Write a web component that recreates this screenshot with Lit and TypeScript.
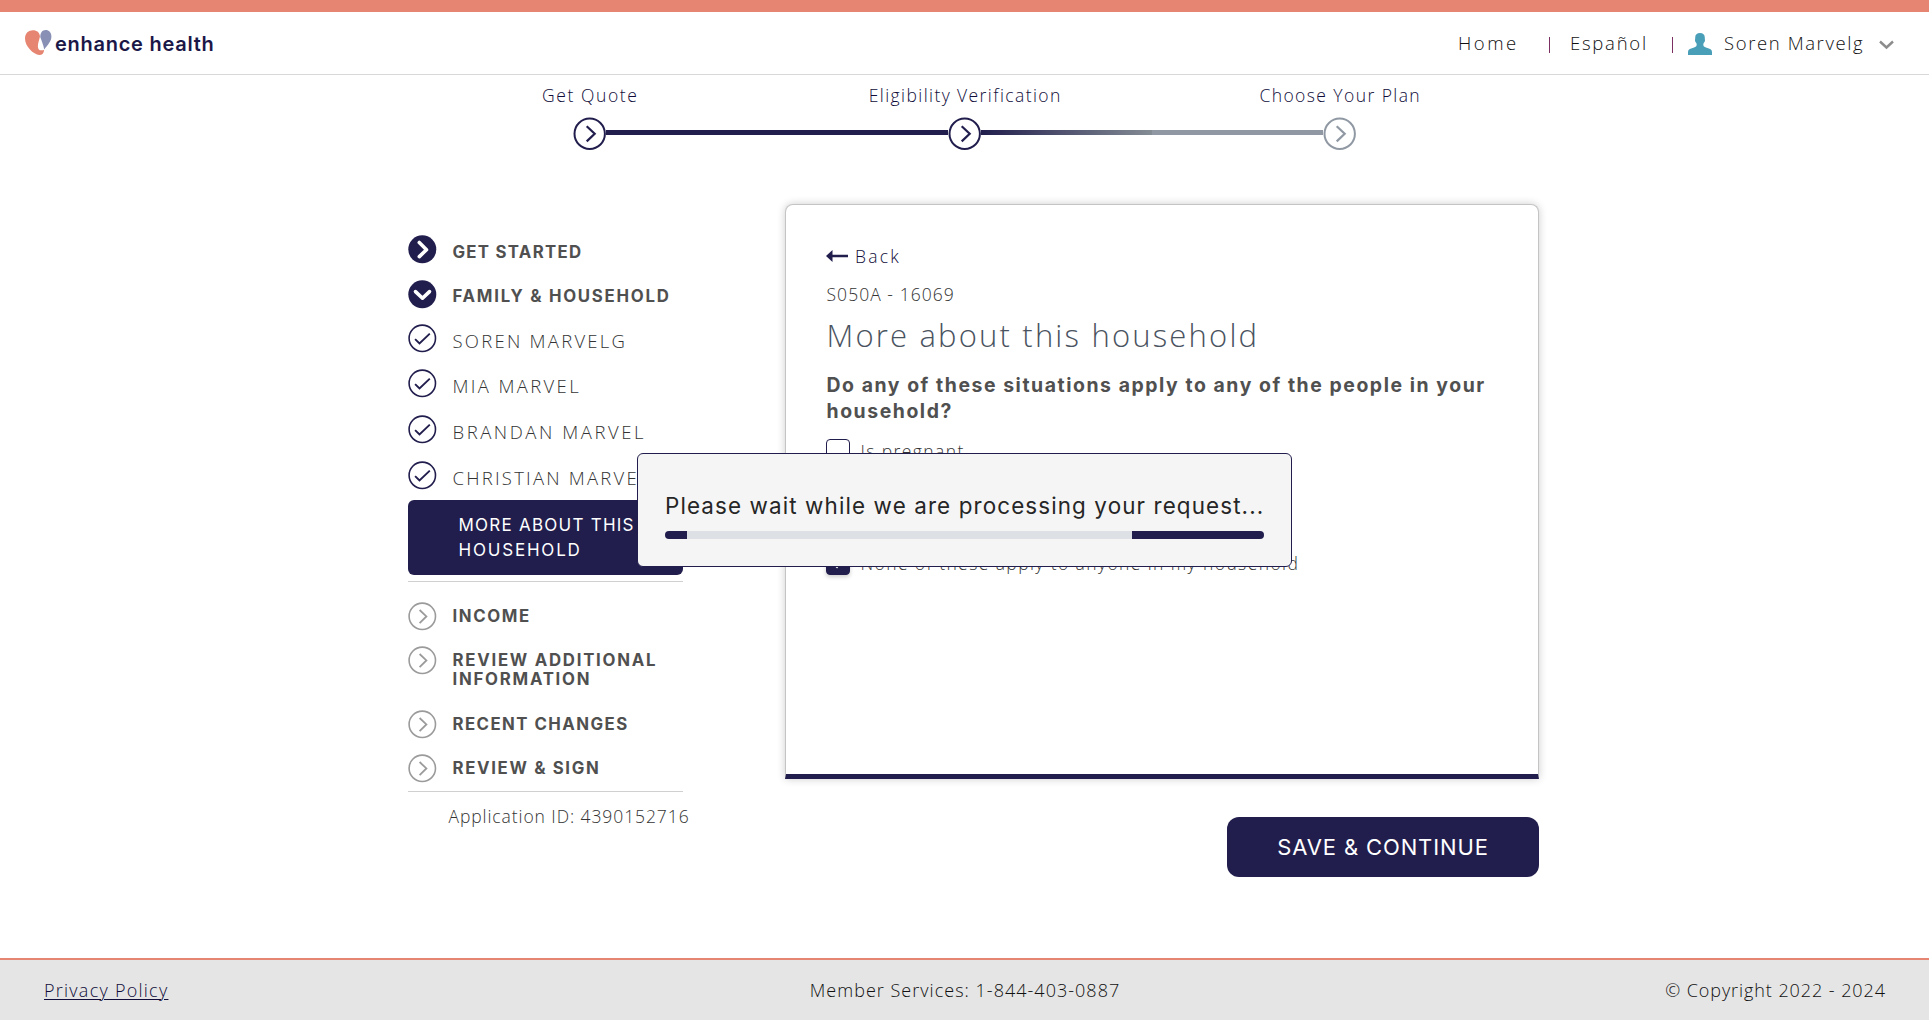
import { LitElement, html, css, svg } from "lit";
import { customElement } from "lit/decorators.js";

type IconKind = "next" | "open" | "check" | "pending";
interface NavRow { label: string; icon: IconKind; kind: string; track: number; }

const TOP_ROWS: NavRow[] = [
  { label: "GET STARTED", icon: "next", kind: "group first", track: 1.28 },
  { label: "FAMILY & HOUSEHOLD", icon: "open", kind: "group second", track: 1.74 },
  { label: "SOREN MARVELG", icon: "check", kind: "member", track: 2.25 },
  { label: "MIA MARVEL", icon: "check", kind: "member mid", track: 2.35 },
  { label: "BRANDAN MARVEL", icon: "check", kind: "member tall", track: 2.55 },
  { label: "CHRISTIAN MARVEL", icon: "check", kind: "member last", track: 2.22 },
];

const BOTTOM_ROWS: NavRow[] = [
  { label: "INCOME", icon: "pending", kind: "group later", track: 1.6 },
  { label: "REVIEW ADDITIONAL INFORMATION", icon: "pending", kind: "group later double", track: 1.74 },
  { label: "RECENT CHANGES", icon: "pending", kind: "group later", track: 1.45 },
  { label: "REVIEW & SIGN", icon: "pending", kind: "group later", track: 1.66 },
];

const STEPS = [
  { label: "Get Quote", state: "done", track: 1.6 },
  { label: "Eligibility Verification", state: "active", track: 1.42 },
  { label: "Choose Your Plan", state: "todo", track: 1.42 },
];

const ICONS = {
  next: svg`<circle cx="14.300" cy="14.300" r="14" fill="#211e4d"/><path d="M11.300 7.500l7.200 7.200-7.200 6.900" fill="none" stroke="#fff" stroke-width="3.600" stroke-linecap="round" stroke-linejoin="round"/>`,
  open: svg`<circle cx="14.300" cy="14.300" r="14" fill="#211e4d"/><path d="M7.500 11.600l7 6.600 7-6.600" fill="none" stroke="#fff" stroke-width="3.600" stroke-linecap="round" stroke-linejoin="round"/>`,
  check: svg`<circle cx="14.300" cy="14.300" r="13.200" fill="#fff" stroke="#211e4d" stroke-width="1.600"/><path d="M7.100 15.100l4.400 4.300L21.800 9.600" fill="none" stroke="#211e4d" stroke-width="1.900"/>`,
  pending: svg`<circle cx="14.300" cy="14.300" r="13.200" fill="#fff" stroke="#9b9b9b" stroke-width="1.600"/><path d="M11.600 8l6.800 6.400-6.800 6.700" fill="none" stroke="#9b9b9b" stroke-width="1.800"/>`,
};

@customElement("app-header")
export class AppHeader extends LitElement {
  static styles = css`
    :host { display: block; }
    .bar {
      box-sizing: border-box; height: 75px; border-top: 12px solid #e68672;
      border-bottom: 1px solid #d8d8d8; display: flex; justify-content: space-between;
      padding: 0 35px 0 25px; background: #fff;
    }
    .brand { display: flex; padding-top: 18px; gap: 3px; }
    .heart { width: 27px; height: 27px; display: block; }
    .name {
      font: 600 20px/28px Inter, sans-serif; letter-spacing: 0.74px; color: #1b1848;
    }
    .links {
      display: flex; align-items: center; height: 63px; padding-bottom: 1px; box-sizing: border-box;
      font: 300 18.5px/28px "Open Sans", sans-serif; color: #111; white-space: nowrap;
    }
    .home { letter-spacing: 2.5px; width: 91px; }
    .lang { letter-spacing: 1.75px; width: 102px; }
    .user { letter-spacing: 1.6px; width: 155px; }
    .sep { width: 1px; height: 16px; background: #7c2f62; margin-top: 4px; }
    .sep.a { margin-right: 20px; }
    .sep.b { margin-right: 15px; }
    .person { width: 24px; height: 22px; margin: 2px 12px 0 0; }
    .caret { width: 15px; height: 10px; margin-top: 4px; }
  `;
  render() {
    return html`<header class="bar">
      <div class="brand">
        <svg class="heart" viewBox="0 0 27 27">
          <path d="M0 8.500C0 3.200 3.600.3 8 .3c4 0 6.500 2.200 7 6-.8 4-2.300 7.400-2.100 10.400.2 3 2 4.400 6.200 3.200-.2 3-1.700 5-4.800 5C8.500 24.600 0 16.500 0 8.500z" fill="#e68672"/>
          <path d="M20.600 0c3.400 0 5.800 2.500 5.800 6.500 0 4.800-3.700 8.500-7.200 13-.6-4.400-2.600-8.600-3.900-12.300C15.200 2.800 17.300 0 20.600 0z" fill="#8890b5"/>
        </svg>
        <span class="name">enhance health</span>
      </div>
      <nav class="links">
        <span class="home">Home</span><i class="sep a"></i>
        <span class="lang">Español</span><i class="sep b"></i>
        <svg class="person" viewBox="0 0 24 22"><path d="M12 0c3 0 4.800 1.600 4.800 4.600 0 1.300.1 1.500.2 2.600.1 1.500-1 2-1.600 3.600-.5 2 .4 3 3.200 4C22 15.700 24 16.500 24 19v3H0v-3c0-2.500 2-3.300 5.400-4.200 2.800-1 3.700-2 3.200-4C8 9.200 6.900 8.700 7 7.200c.1-1.100.2-1.300.2-2.600C7.200 1.600 9 0 12 0z" fill="#4a9fb8"/></svg>
        <span class="user">Soren Marvelg</span>
        <svg class="caret" viewBox="0 0 15 10"><path d="M1 1.500l6.500 6 6.500-6" fill="none" stroke="#8c8c8c" stroke-width="2.400"/></svg>
      </nav>
    </header>`;
  }
}

@customElement("app-steps")
export class AppSteps extends LitElement {
  static styles = css`
    :host { display: block; }
    .steps { display: grid; grid-template-columns: repeat(3, 375px); justify-content: center; padding-top: 7px; }
    .step { display: flex; flex-direction: column; align-items: center; }
    .label { font: 300 17.5px/27px "Open Sans", sans-serif; color: #100d3a; white-space: nowrap; padding-left: 1.5px; }
    .track { display: grid; grid-template-columns: 1fr 33px 1fr; width: 375px; margin-top: 8px; }
    .line { height: 5px; margin-top: 13px; }
    .dot { width: 33px; height: 33px; display: block; overflow: visible; }
    .navy { background: #211e4d; }
    .fade { background: linear-gradient(90deg, #211e4d, #848c94); }
    .grey { background: #8f98a3; }
  `;
  render() {
    const lines: Record<string, [string, string]> = {
      done: ["", "navy"], active: ["navy", "fade"], todo: ["grey", ""],
    };
    return html`<div class="steps">${STEPS.map(s => {
      const ink = s.state === "todo" ? "#8f98a3" : "#211e4d";
      return html`<div class="step">
        <span class="label" style="letter-spacing:${s.track}px">${s.label}</span>
        <div class="track">
          <i class="line ${lines[s.state][0]}"></i>
          <svg class="dot" viewBox="0 0 33 33"><circle cx="16.700" cy="16.800" r="15.200" fill="#fff" stroke="${ink}" stroke-width="2"/><path d="M13.700 9.200l8 7.600-8 7.600" fill="none" stroke="${ink}" stroke-width="2.200"/></svg>
          <i class="line ${lines[s.state][1]}"></i>
        </div>
      </div>`;
    })}</div>`;
  }
}

@customElement("app-sidebar")
export class AppSidebar extends LitElement {
  static styles = css`
    :host { display: block; width: 275px; }
    .row { display: grid; grid-template-columns: 28px 1fr; column-gap: 16.5px; align-items: start; height: 45px; }
    .icon { width: 28px; height: 28px; display: block; overflow: visible; }
    .text { line-height: 19px; padding-top: 7.5px; }
    .group { font: 700 16.8px Inter, sans-serif; color: #505050; }
    .member { font: 300 18.5px "Open Sans", sans-serif; color: #333; white-space: nowrap; height: 45px; }
    .member .text { padding-top: 7px; }
    .first .text { padding-top: 8px; }
    .second { height: 44px; }
    .second .text { padding-top: 7px; }
    .mid, .tall { height: 46px; }
    .last { height: 39px; }
    .later { height: 44px; }
    .later .text { padding-top: 5px; }
    .double { height: 64px; }
    .current {
      height: 75px; box-sizing: border-box; background: #211e4d; color: #fff; border-radius: 6px;
      padding: 13px 30px 0 50.5px; font: 400 17px/25px Inter, sans-serif; letter-spacing: 1.24px;
    }
    .current .wide { letter-spacing: 1.8px; }
    .rule { height: 1px; background: #d0d0d0; margin: 6px 0 20px; }
    .rule.end { margin: -7px 0 0; }
    .app-id {
      font: 300 17.5px/24px "Open Sans", sans-serif; letter-spacing: 0.92px; color: #333;
      padding: 12px 0 0 40.5px; white-space: nowrap;
    }
  `;
  private row(r: NavRow) {
    return html`<div class="row ${r.kind}">
      <svg class="icon" viewBox="0 0 28 28">${ICONS[r.icon]}</svg>
      <span class="text" style="letter-spacing:${r.track}px">${r.label}</span>
    </div>`;
  }
  render() {
    return html`<nav>
      ${TOP_ROWS.map(r => this.row(r))}
      <div class="current">MORE ABOUT THIS <span class="wide">HOUSEHOLD</span></div>
      <div class="rule"></div>
      ${BOTTOM_ROWS.map(r => this.row(r))}
      <div class="rule end"></div>
      <div class="app-id">Application ID: 4390152716</div>
    </nav>`;
  }
}

@customElement("household-card")
export class HouseholdCard extends LitElement {
  static styles = css`
    :host { display: block; }
    .card {
      box-sizing: border-box; width: 754px; height: 575px; border: 1px solid #c4c4c4;
      border-bottom: 5px solid #211e4d; border-radius: 8px 8px 0 0; background: #fff;
      box-shadow: 0 0 8px rgba(0, 0, 0, 0.2); padding: 38px 40px 0;
      font-family: "Open Sans", sans-serif; color: #333;
    }
    .back { display: flex; align-items: center; gap: 7px; height: 25px; color: #100d3a; font-weight: 300; font-size: 17.5px; letter-spacing: 2.2px; }
    .arrow { width: 22px; height: 12px; }
    .code { font-weight: 300; font-size: 17.5px; line-height: 24px; letter-spacing: 1.05px; margin-top: 14px; padding-left: 0.5px; }
    h1 { margin: 9px 0 0; font-weight: 300; font-size: 31px; line-height: 40px; letter-spacing: 2.18px; color: #4a5360; white-space: nowrap; padding-left: 0.5px; }
    h2 { margin: 17px 0 0; font: 700 19.4px/26px Inter, sans-serif; letter-spacing: 1.56px; color: #505050; white-space: nowrap; padding-left: 0.5px; }
    .option { display: flex; align-items: center; gap: 10.5px; height: 24px; font-weight: 300; font-size: 17.5px; letter-spacing: 1.4px; white-space: nowrap; }
    .option.one { margin-top: 15px; }
    .option.none { margin-top: 88px; }
    .box { box-sizing: border-box; width: 24px; height: 24px; border: 1px solid #211e4d; border-radius: 4px; background: #fff; }
    .box.on { background: #211e4d; box-shadow: 0 2px 4px rgba(0, 0, 0, 0.2); display: flex; align-items: center; justify-content: center; }
  `;
  render() {
    return html`<section class="card">
      <div class="back"><svg class="arrow" viewBox="0 0 22 12"><path d="M0 6l6.500-6v4.700H22v2.600H6.500V12z" fill="#211e4d"/></svg>Back</div>
      <div class="code">S050A - 16069</div>
      <h1>More about this household</h1>
      <h2>Do any of these situations apply to any of the people in your<br>household?</h2>
      <div class="option one"><span class="box"></span>Is pregnant</div>
      <div class="option none"><span class="box on"><svg width="14" height="12" viewBox="0 0 14 12"><path d="M2 6l4 4 6-8" fill="none" stroke="#fff" stroke-width="2"/></svg></span>None of these apply to anyone in my household</div>
    </section>`;
  }
}

@customElement("wait-dialog")
export class WaitDialog extends LitElement {
  static styles = css`
    :host { position: fixed; inset: 0; display: grid; place-items: center; }
    .dialog {
      box-sizing: border-box; width: 655px; height: 114px; border: 1px solid #211e4d;
      border-radius: 6px; background: #f5f5f5; padding: 37px 27px 0;
    }
    .message { font: 400 22.4px/30px Inter, sans-serif; letter-spacing: 1.12px; color: #262626; white-space: nowrap; }
    .bar { display: flex; justify-content: space-between; height: 8px; border-radius: 4px; overflow: hidden; background: #dde1e5; margin-top: 10px; }
    .fill { background: #211e4d; }
  `;
  render() {
    const segments = [22, 132];
    return html`<div class="dialog">
      <div class="message">Please wait while we are processing your request...</div>
      <div class="bar">${segments.map(w => html`<i class="fill" style="width:${w}px"></i>`)}</div>
    </div>`;
  }
}

@customElement("app-root")
export class AppRoot extends LitElement {
  static styles = css`
    :host { display: flex; flex-direction: column; height: 1020px; background: #fff; overflow: hidden; }
    main { flex: 1; }
    .content { display: flex; gap: 102px; padding: 54px 0 0 408px; }
    .side { padding-top: 31px; }
    .work { width: 754px; display: flex; flex-direction: column; align-items: flex-end; gap: 38px; }
    .save {
      box-sizing: border-box; width: 312px; height: 60px; border: 0; border-radius: 12px; background: #211e4d; color: #fff;
      font: 400 22px/60px Inter, sans-serif; letter-spacing: 0.87px; padding: 0; text-align: center;
    }
    footer {
      box-sizing: border-box; height: 62px; border-top: 2px solid #e68672; background: #e5e5e5;
      display: grid; grid-template-columns: 1fr auto 1fr; align-items: center; padding: 0 43px 0 44px;
      font: 300 18px/28px "Open Sans", sans-serif; color: #111; white-space: nowrap;
    }
    .privacy { letter-spacing: 1.25px; color: #100d3a; text-decoration: underline; text-decoration-thickness: 1px; text-underline-offset: 2px; }
    .phone { letter-spacing: 1.02px; }
    .rights { letter-spacing: 0.93px; text-align: right; }
  `;
  render() {
    return html`
      <app-header></app-header>
      <main>
        <app-steps></app-steps>
        <div class="content">
          <app-sidebar class="side"></app-sidebar>
          <div class="work">
            <household-card></household-card>
            <button class="save">SAVE &amp; CONTINUE</button>
          </div>
        </div>
      </main>
      <footer><span><a class="privacy">Privacy Policy</a></span><span class="phone">Member Services: 1-844-403-0887</span><span class="rights">© Copyright 2022 - 2024</span></footer>
      <wait-dialog></wait-dialog>`;
  }
}
